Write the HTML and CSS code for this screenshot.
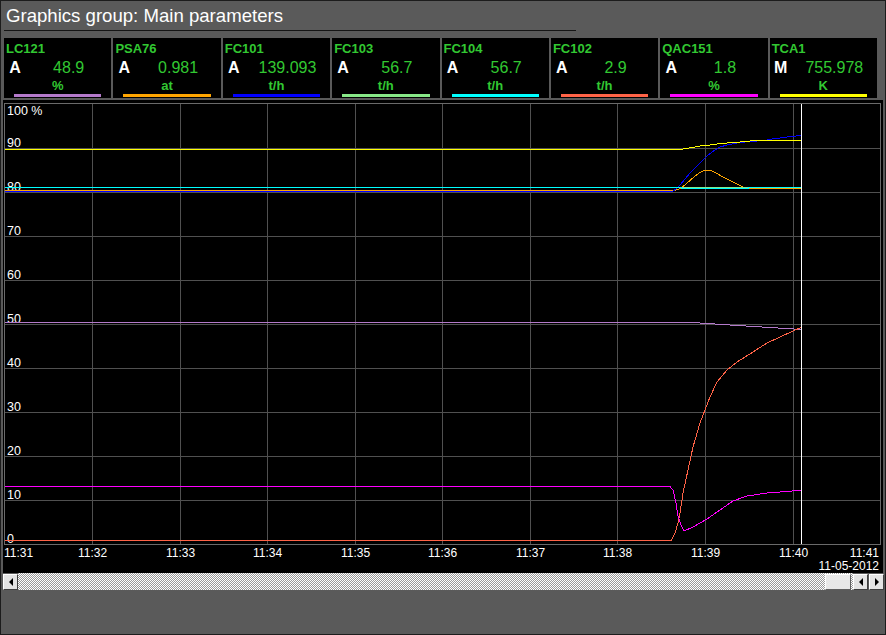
FILE: index.html
```html
<!DOCTYPE html>
<html>
<head>
<meta charset="utf-8">
<link rel="stylesheet" href="styles.css">
</head>
<body>
<div class="window">
  <div class="title">Graphics group: Main parameters</div>
  <div class="rule"></div>
  <div class="tags">
    <div class="tag"><div class="tag-name">LC121</div><div class="tag-row"><span class="mode">A</span><span class="value">48.9</span></div><div class="unit">%</div><div class="bar bar-purple"></div></div>
    <div class="tag"><div class="tag-name">PSA76</div><div class="tag-row"><span class="mode">A</span><span class="value">0.981</span></div><div class="unit">at</div><div class="bar bar-orange"></div></div>
    <div class="tag"><div class="tag-name">FC101</div><div class="tag-row"><span class="mode">A</span><span class="value">139.093</span></div><div class="unit">t/h</div><div class="bar bar-blue"></div></div>
    <div class="tag"><div class="tag-name">FC103</div><div class="tag-row"><span class="mode">A</span><span class="value">56.7</span></div><div class="unit">t/h</div><div class="bar bar-lightgreen"></div></div>
    <div class="tag"><div class="tag-name">FC104</div><div class="tag-row"><span class="mode">A</span><span class="value">56.7</span></div><div class="unit">t/h</div><div class="bar bar-cyan"></div></div>
    <div class="tag"><div class="tag-name">FC102</div><div class="tag-row"><span class="mode">A</span><span class="value">2.9</span></div><div class="unit">t/h</div><div class="bar bar-red"></div></div>
    <div class="tag"><div class="tag-name">QAC151</div><div class="tag-row"><span class="mode">A</span><span class="value">1.8</span></div><div class="unit">%</div><div class="bar bar-magenta"></div></div>
    <div class="tag"><div class="tag-name">TCA1</div><div class="tag-row"><span class="mode">M</span><span class="value">755.978</span></div><div class="unit">K</div><div class="bar bar-yellow"></div></div>
  </div>
  <div class="chart">
    <svg class="plot" width="880" height="473" viewBox="3 100 880 473" xmlns="http://www.w3.org/2000/svg">
      <g class="grid" shape-rendering="crispEdges">
        <line x1="4" y1="148.5" x2="881" y2="148.5"/>
        <line x1="4" y1="192.5" x2="881" y2="192.5"/>
        <line x1="4" y1="236.5" x2="881" y2="236.5"/>
        <line x1="4" y1="280.5" x2="881" y2="280.5"/>
        <line x1="4" y1="324.5" x2="881" y2="324.5"/>
        <line x1="4" y1="368.5" x2="881" y2="368.5"/>
        <line x1="4" y1="412.5" x2="881" y2="412.5"/>
        <line x1="4" y1="456.5" x2="881" y2="456.5"/>
        <line x1="4" y1="500.5" x2="881" y2="500.5"/>
        <line x1="92.5" y1="104" x2="92.5" y2="544"/>
        <line x1="180.5" y1="104" x2="180.5" y2="544"/>
        <line x1="267.5" y1="104" x2="267.5" y2="544"/>
        <line x1="355.5" y1="104" x2="355.5" y2="544"/>
        <line x1="442.5" y1="104" x2="442.5" y2="544"/>
        <line x1="530.5" y1="104" x2="530.5" y2="544"/>
        <line x1="617.5" y1="104" x2="617.5" y2="544"/>
        <line x1="705.5" y1="104" x2="705.5" y2="544"/>
        <line x1="793.5" y1="104" x2="793.5" y2="544"/>
      </g>
      <g class="frame" shape-rendering="crispEdges">
        <line x1="4" y1="103.5" x2="881" y2="103.5"/>
        <line x1="4" y1="544.5" x2="881" y2="544.5"/>
        <line x1="4.5" y1="103" x2="4.5" y2="545"/>
        <line x1="880.5" y1="103" x2="880.5" y2="545"/>
      </g>
      <g class="ylabels">
        <text x="7" y="115">100 %</text>
        <text x="7" y="147">90</text>
        <text x="7" y="191">80</text>
        <text x="7" y="235">70</text>
        <text x="7" y="279">60</text>
        <text x="7" y="323">50</text>
        <text x="7" y="367">40</text>
        <text x="7" y="411">30</text>
        <text x="7" y="455">20</text>
        <text x="7" y="499">10</text>
        <text x="7" y="543">0</text>
      </g>
      <g class="traces" fill="none" shape-rendering="crispEdges">
        <polyline class="t-purple" points="5,322.5 692,322.5 730,325 770,327.5 802,329.5"/>
        <polyline class="t-orange" points="5,190.5 675,190.5 680,188.5 685,185 690,180.5 695,176 700,172.5 704,170.5 711,170.5 716,173 722,176.5 728,179.5 734,182.5 740,185.5 746,188.5 802,188.5"/>
        <polyline class="t-blue" points="5,191.5 672,191.5 676,189 680,185 685,179 690,173 695,168 700,163 705,158 710,153.5 715,150 720,147 727,145 740,142.5 750,141.5 765,140.5 772,139 780,138 790,136.5 802,135.5"/>
        <polyline class="t-lightgreen" points="5,187.5 802,187.5"/>
        <polyline class="t-cyan" points="5,187.5 681,187.5 682,188.5 748,188.5 749,187.5 802,187.5"/>
        <polyline class="t-red" points="5,540.5 671,540.5 675,533.5 678,523 680,513 683,493 688,470 693,447 700,423 705,410 710,397 717,382 727,370 737,362 753,352 767,343 780,337 793,331 802,327"/>
        <polyline class="t-magenta" points="5,486.5 670,486.5 673,490 676,503 678,516 681,525 684,531 693,527 707,519 720,510 733,501 747,496 767,493 787,491.5 802,490"/>
        <polyline class="t-yellow" points="5,149.5 680,149.5 686,148.5 692,147.5 700,146 710,145 720,143.5 735,142.5 745,141.5 755,140.5 802,140.5"/>
      </g>
      <line class="cursor" shape-rendering="crispEdges" x1="801.5" y1="104" x2="801.5" y2="544"/>
      <g class="xlabels">
        <text x="4" y="556.5" text-anchor="start">11:31</text>
        <text x="92.5" y="556.5" text-anchor="middle">11:32</text>
        <text x="180.5" y="556.5" text-anchor="middle">11:33</text>
        <text x="267.5" y="556.5" text-anchor="middle">11:34</text>
        <text x="355.5" y="556.5" text-anchor="middle">11:35</text>
        <text x="442.5" y="556.5" text-anchor="middle">11:36</text>
        <text x="530.5" y="556.5" text-anchor="middle">11:37</text>
        <text x="617.5" y="556.5" text-anchor="middle">11:38</text>
        <text x="705.5" y="556.5" text-anchor="middle">11:39</text>
        <text x="793.5" y="556.5" text-anchor="middle">11:40</text>
        <text x="879" y="556.5" text-anchor="end">11:41</text>
        <text x="879" y="570" text-anchor="end">11-05-2012</text>
      </g>
    </svg>
  </div>
  <div class="scrollbar">
    <div class="sb-btn"><span class="arrow-left"></span></div>
    <div class="sb-track"><div class="sb-thumb"></div></div>
    <div class="sb-btn"><span class="arrow-left"></span></div>
    <div class="sb-btn sb-btn-last"><span class="arrow-right"></span></div>
  </div>
</div>
</body>
</html>
```
FILE: styles.css
```css
html, body {
  margin: 0;
  padding: 0;
  background: #5a5a5a;
}

.window {
  box-sizing: border-box;
  width: 886px;
  height: 635px;
  border: 1px solid #1c1c1c;
  background: #5a5a5a;
  font-family: "Liberation Sans", Arial, sans-serif;
  overflow: hidden;
}

.title {
  padding: 4px 0 0 5px;
  height: 21px;
  line-height: 21px;
  font-size: 18.6px;
  color: #ffffff;
  white-space: nowrap;
}

.rule {
  margin: 4px 0 0 3px;
  width: 572px;
  border-top: 1px solid #151515;
}

.tags {
  margin: 7px 0 0 3px;
  width: 873px;
  height: 60px;
  display: grid;
  grid-template-columns: repeat(8, 1fr);
  column-gap: 2px;
}

.tag {
  background: #000;
  display: flex;
  flex-direction: column;
  padding-top: 3px;
  box-sizing: border-box;
  min-width: 0;
}

.tag-name {
  padding-left: 2px;
  font-weight: 700;
  font-size: 13px;
  line-height: 15px;
  color: #32c832;
}

.tag-row {
  display: flex;
  margin-top: 3px;
  height: 18px;
  line-height: 18px;
}

.mode {
  width: 22px;
  text-align: center;
  font-weight: 700;
  font-size: 16px;
  color: #ffffff;
}

.value {
  flex: 1;
  text-align: center;
  font-size: 16px;
  color: #32c832;
}

.unit {
  margin-top: 1px;
  font-weight: 700;
  font-size: 13px;
  line-height: 15px;
  text-align: center;
  color: #32c832;
}

.bar {
  height: 3px;
  margin: 1px 10px 0 10px;
}

.bar-purple { background: #b47acb; }
.bar-orange { background: #ffa500; }
.bar-blue { background: #0000ff; }
.bar-lightgreen { background: #88e888; }
.bar-cyan { background: #00ffff; }
.bar-red { background: #ff6347; }
.bar-magenta { background: #ff00ff; }
.bar-yellow { background: #ffff00; }

.chart {
  margin: 2px 0 0 2px;
  width: 880px;
  height: 473px;
  background: #000;
}

.plot {
  display: block;
}

.grid line {
  stroke: #505050;
  stroke-width: 1;
}

.frame line {
  stroke: #6a6a6a;
  stroke-width: 1;
}

.ylabels text {
  font-family: "Liberation Sans", Arial, sans-serif;
  font-size: 12.5px;
  fill: #ffffff;
}

.xlabels text {
  font-family: "Liberation Sans", Arial, sans-serif;
  font-size: 12px;
  fill: #ffffff;
}

.traces polyline {
  stroke-width: 1;
}

.t-purple { stroke: #b47acb; }
.t-orange { stroke: #ffa500; }
.t-blue { stroke: #0000ff; }
.t-lightgreen { stroke: #88e888; }
.t-cyan { stroke: #00ffff; }
.t-red { stroke: #ff6347; }
.t-magenta { stroke: #ff00ff; }
.t-yellow { stroke: #ffff00; }

.cursor {
  stroke: #ffffff;
  stroke-width: 1;
}

.scrollbar {
  margin-left: 2px;
  width: 881px;
  height: 17px;
  display: flex;
  align-items: center;
}

.sb-btn {
  box-sizing: border-box;
  width: 15px;
  height: 16px;
  flex: none;
  background: #e4e4e4;
  border: 1px solid;
  border-color: #ffffff #404040 #404040 #ffffff;
  display: flex;
  align-items: center;
  justify-content: center;
}

.sb-btn-last {
  margin-left: 1px;
}

.sb-track {
  flex: 1;
  height: 17px;
  display: flex;
  justify-content: flex-end;
  align-items: center;
  background-color: #d0d0d0;
  background-image: conic-gradient(#ffffff 25%, #9a9a9a 0 50%, #ffffff 0 75%, #9a9a9a 0);
  background-size: 2px 2px;
}

.sb-thumb {
  box-sizing: border-box;
  width: 26px;
  height: 16px;
  margin-right: 2px;
  background: #e8e8e8;
  border: 1px solid;
  border-color: #ffffff #606060 #606060 #ffffff;
}

.arrow-left {
  width: 0;
  height: 0;
  border-top: 4px solid transparent;
  border-bottom: 4px solid transparent;
  border-right: 4px solid #000;
}

.arrow-right {
  width: 0;
  height: 0;
  border-top: 4px solid transparent;
  border-bottom: 4px solid transparent;
  border-left: 4px solid #000;
}
```
